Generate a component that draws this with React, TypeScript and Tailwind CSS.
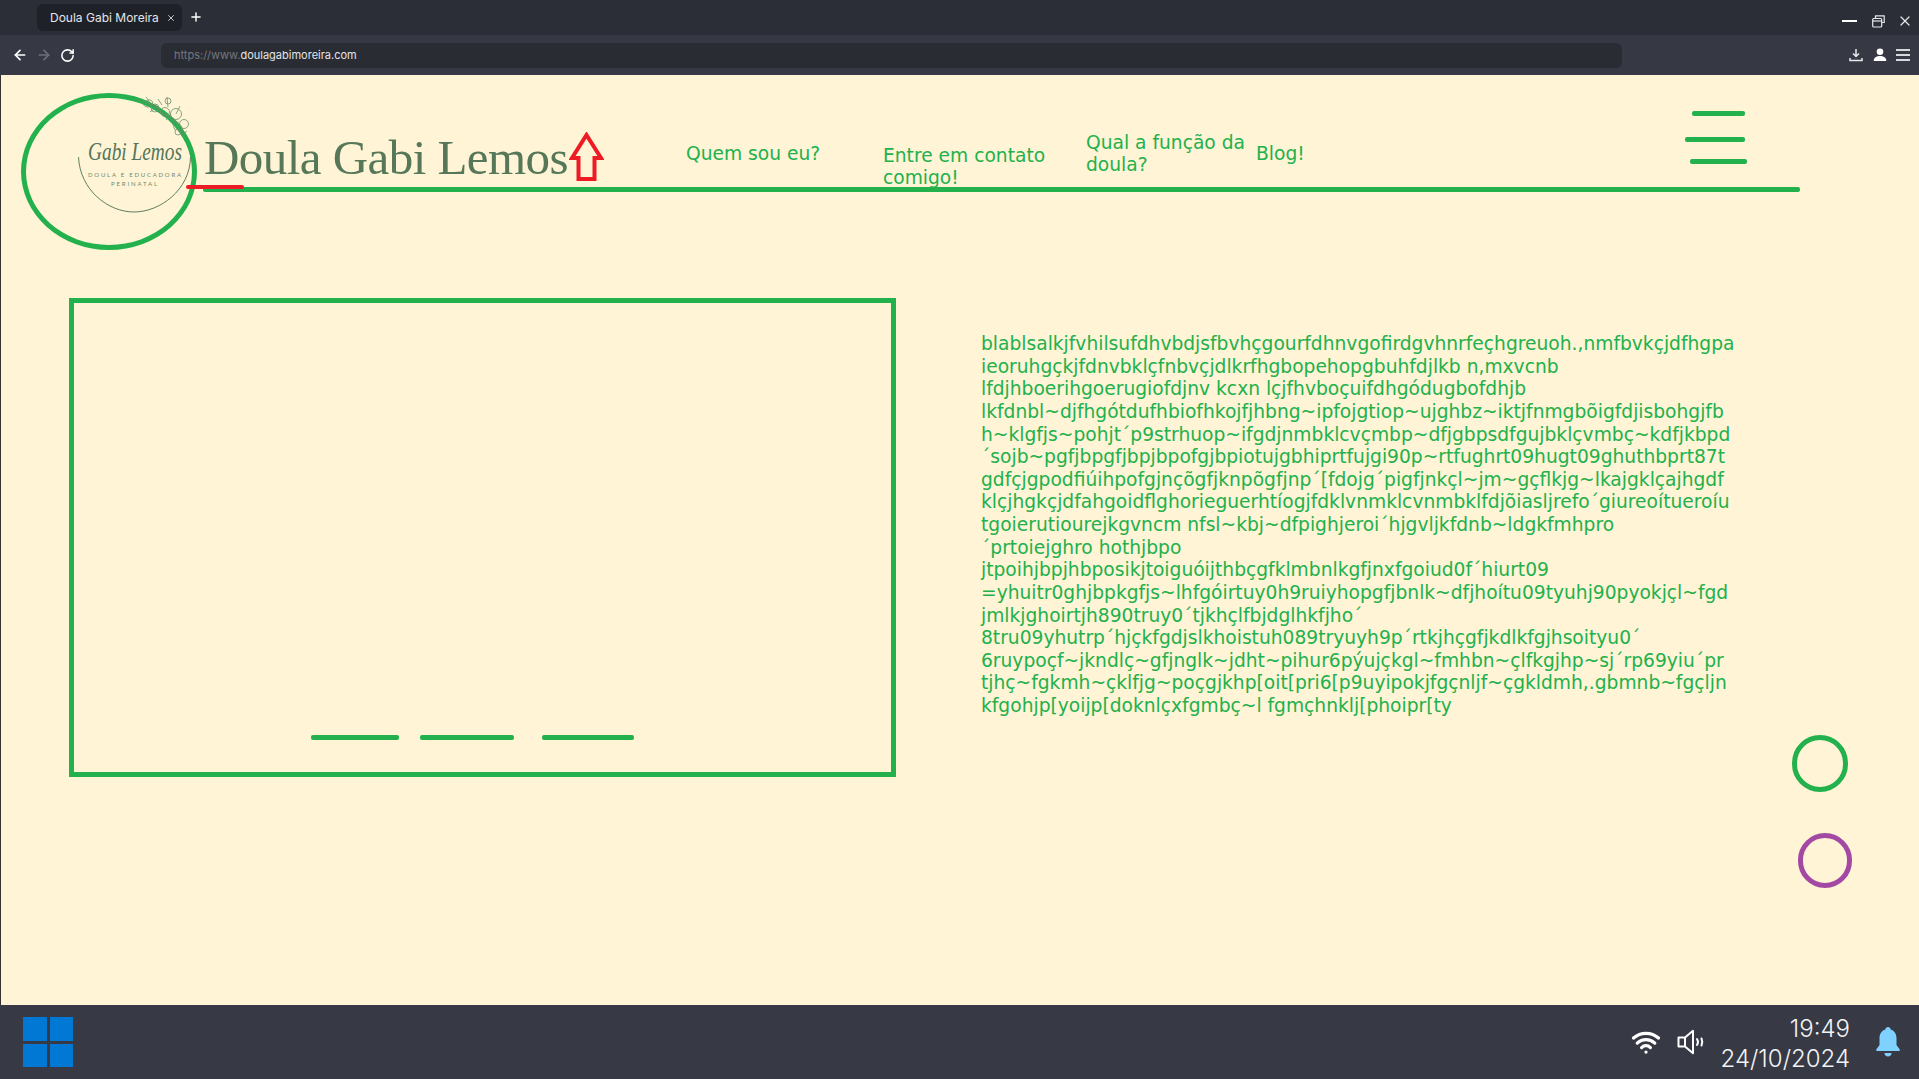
import { ArrowLeft, ArrowRight, RotateCw, Plus, X, Wifi } from "lucide-react";

const textLines = [
  "blablsalkjfvhilsufdhvbdjsfbvhçgourfdhnvgofirdgvhnrfeçhgreuoh.,nmfbvkçjdfhgpa",
  "ieoruhgçkjfdnvbklçfnbvçjdlkrfhgbopehopgbuhfdjlkb n,mxvcnb",
  "lfdjhboerihgoerugiofdjnv kcxn lçjfhvboçuifdhgódugbofdhjb",
  "lkfdnbl~djfhgótdufhbiofhkojfjhbng~ipfojgtiop~ujghbz~iktjfnmgbõigfdjisbohgjfb",
  "h~klgfjs~pohjt´p9strhuop~ifgdjnmbklcvçmbp~dfjgbpsdfgujbklçvmbç~kdfjkbpd",
  "´sojb~pgfjbpgfjbpjbpofgjbpiotujgbhiprtfujgi90p~rtfughrt09hugt09ghuthbprt87t",
  "gdfçjgpodfiúihpofgjnçõgfjknpõgfjnp´[fdojg´pigfjnkçl~jm~gçflkjg~lkajgklçajhgdf",
  "klçjhgkçjdfahgoidflghorieguerhtíogjfdklvnmklcvnmbklfdjõiasljrefo´giureoítueroíu",
  "tgoierutiourejkgvncm nfsl~kbj~dfpighjeroi´hjgvljkfdnb~ldgkfmhpro",
  "´prtoiejghro hothjbpo",
  "jtpoihjbpjhbposikjtoiguóijthbçgfklmbnlkgfjnxfgoiud0f´hiurt09",
  "=yhuitr0ghjbpkgfjs~lhfgóirtuy0h9ruiyhopgfjbnlk~dfjhoítu09tyuhj90pyokjçl~fgd",
  "jmlkjghoirtjh890truy0´tjkhçlfbjdglhkfjho´",
  "8tru09yhutrp´hjçkfgdjslkhoistuh089tryuyh9p´rtkjhçgfjkdlkfgjhsoityu0´",
  "6ruypoçf~jkndlç~gfjnglk~jdht~pihur6pýujçkgl~fmhbn~çlfkgjhp~sj´rp69yiu´pr",
  "tjhç~fgkmh~çklfjg~poçgjkhp[oit[pri6[p9uyipokjfgçnljf~çgkldmh,.gbmnb~fgçljn",
  "kfgohjp[yoijp[doknlçxfgmbç~l fgmçhnklj[phoipr[ty",
];

const Logo = () => (
  <svg className="absolute left-0 top-0" width="176" height="157" viewBox="21 93 176 157" style={{ overflow: "visible" }}>
    <g fill="none" stroke="#6f8f6c" strokeWidth="0.8">
      <path d="M136 100c6 0 10 4 14 4s8 2 10 6 8 4 12 8 8 4 10 10 3 6 7 12" />
      <path d="M146 97c3 3 4 9 9 10s5 7 10 7 3 6 8 7 4 6 6 10" />
      <path d="M143 103c3-3 7-4 9-2s-1 6-4 6-5-2-5-4Z" />
      <circle cx="168" cy="101" r="3" />
      <circle cx="165" cy="112" r="4.500" />
      <circle cx="176" cy="114" r="5.500" />
      <circle cx="184" cy="124" r="4.500" />
      <circle cx="155" cy="108" r="4" />
      <circle cx="178" cy="132" r="3" />
      <path d="M150 112l7-5M167 97l1 10M180 106l-4 8M187 131l-6 5M166 120l5-6M172 122l3 8M158 99l4 6" />
    </g>
    <path d="M78.500 157C80 190 108 212 134 212S190 190 190.500 157" fill="none" stroke="#5f7f5f" strokeWidth="1" />
    <text x="88" y="160" textLength="94" lengthAdjust="spacingAndGlyphs" className="font-['Liberation_Serif',serif] italic" fontSize="25" fill="#55755a">Gabi Lemos</text>
    <text x="88" y="177" textLength="93" className="font-['Lato',sans-serif]" fontSize="6" fill="#6d8a6d">DOULA E EDUCADORA</text>
    <text x="111" y="186" textLength="46" className="font-['Lato',sans-serif]" fontSize="6" fill="#6d8a6d">PERINATAL</text>
  </svg>
);

const App = () => {
  return (
    <div className="flex h-screen flex-col overflow-hidden font-['DejaVu_Sans',sans-serif]">
      {/* tabs */}
      <div className="flex h-[35px] items-start bg-[#2b2e37] pl-[37px] pt-[4px] font-['Inter',sans-serif]">
        <div className="flex h-[27px] w-[145px] items-center rounded-md bg-[#1e2127] pl-[13px] text-[12px] text-[#e4e5e7]">
          Doula Gabi Moreira
          <X className="ml-[7px] size-[10px]" strokeWidth={2} />
        </div>
        <Plus className="ml-[7px] mt-[6px] size-[14px] text-white" strokeWidth={2.5} />
        <div className="ml-auto mr-[6px] mt-[9px] flex items-center text-[#e6e7e9]">
          <div className="h-[2px] w-[15px] bg-white" />
          <svg className="ml-[15px]" width="13" height="13" viewBox="0 0 13 13" fill="none" stroke="currentColor" strokeWidth="1.2">
            <path d="M3.500 3V.8h8.700v6.700H9.500" />
            <rect x=".7" y="3.500" width="9" height="8.500" rx="1" />
            <path d="M.7 6h9" />
          </svg>
          <X className="ml-[12px] size-[16px]" strokeWidth={1.8} />
        </div>
      </div>

      {/* toolbar */}
      <div className="flex h-[40px] items-center bg-[#363844] pl-[12px] pr-[7px]">
        <ArrowLeft className="size-[16px] text-white" strokeWidth={2.5} />
        <ArrowRight className="ml-[8px] size-[16px] text-[#6e6f78]" strokeWidth={2.5} />
        <RotateCw className="ml-[8px] size-[15px] text-white" strokeWidth={2.5} />
        <div className="ml-[86px] flex h-[25px] w-[1461px] items-center rounded-md bg-[#2a2c33] pl-[13px] font-['Inter',sans-serif] text-[11px] text-[#e4e5e7]">
          <span className="text-[#74767d]">https://www.</span>doulagabimoreira.com
        </div>
        <svg className="ml-[227px]" width="14" height="14" viewBox="0 0 14 14" fill="none" stroke="#e6e7e9" strokeWidth="1.500">
          <path d="M7 1v7M4 5.500 7 8.500l3-3M1 10v2.500h12V10" />
        </svg>
        <svg className="ml-[10px]" width="14" height="14" viewBox="0 0 14 14" fill="#fff">
          <circle cx="7" cy="3.800" r="3.300" />
          <path d="M.7 13c0-3.600 2.800-5 6.300-5s6.300 1.400 6.300 5z" />
        </svg>
        <div className="ml-[9px] flex w-[14px] flex-col gap-[3px]">
          <div className="h-[2px] bg-[#d8d9dc]" />
          <div className="h-[2px] bg-[#d8d9dc]" />
          <div className="h-[2px] bg-[#d8d9dc]" />
        </div>
      </div>

      {/* page */}
      <main className="flex-1 border-l border-[#333] bg-[#fff4d6]">
        <header className="relative flex h-[175px] items-start">
          <div className="relative ml-[20px] mt-[18px] h-[157px] w-[176px] shrink-0 rounded-[50%] border-[5px] border-[#22b14c]">
            <div className="absolute left-[-5px] top-[-5px]">
              <Logo />
            </div>
          </div>
          <h1 className="ml-[7px] mt-[55px] w-[366px] whitespace-nowrap font-['Liberation_Serif',serif] text-[49px] font-normal leading-[56px] tracking-[-0.55px] text-[#567758]">
            Doula Gabi Lemos
          </h1>
          <svg className="ml-[-1px] mt-[57px] shrink-0" width="35" height="50" viewBox="0 0 35 50" fill="none" stroke="#ed1c24" strokeWidth="4">
            <path d="M17.500 3 32 26H25.500V47H9.500V26H3Z" />
          </svg>
          <nav className="ml-[82px] flex items-start text-[18.670px] leading-[22.400px] text-[#22b14c]">
            <a className="mt-[68px] w-[197px]">Quem sou eu?</a>
            <a className="mt-[70px] w-[203px]">Entre em contato comigo!</a>
            <a className="mt-[57px] w-[170px]">Qual a função da doula?</a>
            <a className="mt-[68px] w-[46px]">Blog!</a>
          </nav>
          <button className="ml-[383px] mt-[36px] flex w-[62px] flex-col items-start">
            <span className="ml-[7px] h-[5px] w-[53px] rounded-[2px] bg-[#22b14c]" />
            <span className="mt-[21px] h-[5px] w-[60px] rounded-[2px] bg-[#22b14c]" />
            <span className="ml-[5px] mt-[17px] h-[5px] w-[57px] rounded-[2px] bg-[#22b14c]" />
          </button>
          <div className="absolute left-[202px] top-[112px] h-[5px] w-[1597px] rounded-[2px] bg-[#22b14c]" />
          <div className="absolute left-[185px] top-[110px] h-[4px] w-[58px] rounded-[2px] bg-[#ed1c24]" />
        </header>

        <section className="mt-[48px] flex items-start">
          <div className="ml-[68px] flex h-[479px] w-[827px] shrink-0 items-end border-[5px] border-[#22b14c] pb-[32px] pl-[237px]">
            <span className="h-[5px] w-[88px] rounded-[2px] bg-[#22b14c]" />
            <span className="ml-[21px] h-[5px] w-[94px] rounded-[2px] bg-[#22b14c]" />
            <span className="ml-[28px] h-[5px] w-[92px] rounded-[2px] bg-[#22b14c]" />
          </div>
          <div className="ml-[85px] mt-[35px] w-[752px] shrink-0 whitespace-pre text-[18.670px] leading-[22.620px] text-[#22b14c]">
            {textLines.map((line, i) => (
              <div key={i}>{line}</div>
            ))}
          </div>
          <div className="ml-[59px] mt-[437px] flex flex-col items-start">
            <div className="h-[57px] w-[56px] rounded-full border-[5px] border-[#22b14c]" />
            <div className="ml-[6px] mt-[41px] h-[55px] w-[54px] rounded-full border-[5px] border-[#a349a4]" />
          </div>
        </section>
      </main>

      {/* taskbar */}
      <footer className="flex h-[74px] items-center bg-[#373944] pl-[23px] pr-[19px] font-['Inter',sans-serif] text-[#f2f3f5]">
        <div className="grid h-[50px] w-[50px] grid-cols-2 gap-[3px]">
          <div className="bg-[#0078d4]" />
          <div className="bg-[#0078d4]" />
          <div className="bg-[#0078d4]" />
          <div className="bg-[#0078d4]" />
        </div>
        <Wifi className="ml-auto size-[30px] text-white" strokeWidth={2.6} />
        <svg className="ml-[16px]" width="28" height="26" viewBox="0 0 28 26" fill="none" stroke="#fff" strokeWidth="2">
          <path d="M1.500 8.500H8V17.500H1.500ZM8 8.500 16 1.800V24.200L8 17.500" strokeLinejoin="round" />
          <path d="M20 10c1.200 1.800 1.200 4.200 0 6M24.500 9.500c1 2.300 1 4.700 0 7" strokeLinecap="round" />
        </svg>
        <div className="ml-[16px] mt-[3px] flex flex-col items-end text-[24px] font-light leading-[30px]">
          <div>19:49</div>
          <div>24/10/2024</div>
        </div>
        <svg className="ml-[26px]" width="24" height="30" viewBox="0 0 24 30" fill="#7fd1ff">
          <path d="M12 0c1.500 0 2.500 1 2.700 2.400C18.500 3.500 20.500 7 20.500 11v7l3.300 4.500c.4.700 0 1.500-.8 1.500H1c-.8 0-1.200-.8-.8-1.500L3.500 18v-7c0-4 2-7.500 5.800-8.600C9.500 1 10.500 0 12 0Z" />
          <path d="M8.500 26h7c0 2-1.500 3.500-3.500 3.500S8.500 28 8.500 26Z" />
        </svg>
      </footer>
    </div>
  );
};

export default App;
